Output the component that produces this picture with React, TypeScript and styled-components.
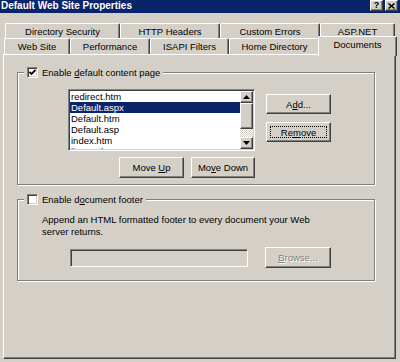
import React from "react";
import styled, { createGlobalStyle, css } from "styled-components";

const FACE = "#d4d0c8";
const NAVY = "#0a246a";

const GlobalStyle = createGlobalStyle`
  html, body { margin: 0; padding: 0; }
  body {
    font-family: "Liberation Sans", Arial, sans-serif;
    font-size: 9.5px;
    color: #000;
    background: ${FACE};
  }
  * { box-sizing: border-box; }
`;

const raised = css`
  border: 1px solid;
  border-color: #fff #404040 #404040 #fff;
  box-shadow: inset -1px -1px 0 #808080;
  background: ${FACE};
`;

const sunken = css`
  border: 1px solid;
  border-color: #808080 #fff #fff #808080;
  box-shadow: inset 1px 1px 0 #404040, inset -1px -1px 0 ${FACE};
`;

const Window = styled.div`
  width: 400px;
  height: 362px;
  background: ${FACE};
  display: flex;
  flex-direction: column;
  overflow: hidden;
`;

const TitleBar = styled.div`
  height: 13px;
  flex: none;
  background: ${NAVY};
  display: flex;
  justify-content: space-between;
  align-items: flex-start;
  padding-right: 2px;
`;

const TitleText = styled.div`
  color: #fff;
  font-weight: bold;
  font-size: 10px;
  line-height: 12px;
  white-space: nowrap;
  padding-left: 1px;
`;

const CaptionButtons = styled.div`
  display: flex;
  gap: 2px;
`;

const CaptionButton = styled.div`
  ${raised};
  width: 13px;
  height: 11px;
  display: flex;
  align-items: center;
  justify-content: center;
  font-weight: bold;
  font-size: 9px;
  line-height: 9px;
`;

const Body = styled.div`
  flex: 1;
  min-height: 0;
  display: flex;
  flex-direction: column;
  padding: 10px 4px 3px 3px;
`;

const TabRow = styled.div<{ $h: number; $indent: number }>`
  display: flex;
  align-items: flex-end;
  flex: none;
  height: ${(p) => p.$h}px;
  padding-left: ${(p) => p.$indent}px;
`;

const Tab = styled.div<{ $w: number; $active?: boolean }>`
  width: ${(p) => p.$w}px;
  height: 100%;
  flex: none;
  background: ${FACE};
  border-top: 1px solid #fff;
  border-left: 1px solid #fff;
  border-right: 1px solid #404040;
  box-shadow: inset -1px 0 0 #808080;
  border-radius: 2px 2px 0 0;
  display: flex;
  align-items: center;
  justify-content: center;
  white-space: nowrap;
  ${(p) =>
    p.$active &&
    css`
      height: 20px;
      margin: 0 -2px -2px -2px;
      padding-bottom: 4px;
      position: relative;
      z-index: 1;
    `}
`;

const Panel = styled.div`
  flex: 1;
  border: 1px solid;
  border-color: #fff #404040 #404040 #fff;
  box-shadow: inset -1px -1px 0 #808080;
  padding: 17px 0 0 13px;
  display: flex;
  flex-direction: column;
  gap: 14px;
`;

const Group = styled.div`
  position: relative;
  width: 358px;
  border: 1px solid #808080;
  box-shadow: inset 1px 1px 0 #fff, 1px 1px 0 #fff;
`;

const Legend = styled.div`
  position: absolute;
  top: -6px;
  left: 6px;
  padding: 0 3px;
  background: ${FACE};
  display: flex;
  align-items: center;
  gap: 4px;
  line-height: 11px;
  white-space: nowrap;
`;

const CheckBox = styled.span`
  ${sunken};
  width: 11px;
  height: 11px;
  flex: none;
  background: #fff;
  display: flex;
  align-items: center;
  justify-content: center;
`;

const ContentBody = styled.div`
  display: grid;
  grid-template-columns: 187px 65px;
  column-gap: 11px;
  row-gap: 6px;
  padding: 16px 0 6px 50px;
`;

const ListBox = styled.div`
  ${sunken};
  background: #fff;
  height: 62px;
  padding: 1px;
  display: flex;
`;

const ListItems = styled.div`
  flex: 1;
  overflow: hidden;
`;

const ListItem = styled.div<{ $selected?: boolean }>`
  height: 11px;
  line-height: 11px;
  padding-left: 1px;
  white-space: nowrap;
  background: ${(p) => (p.$selected ? NAVY : "transparent")};
  color: ${(p) => (p.$selected ? "#fff" : "#000")};
`;

const ScrollBar = styled.div`
  width: 13px;
  flex: none;
  display: flex;
  flex-direction: column;
`;

const ScrollArrow = styled.div`
  ${raised};
  height: 12px;
  flex: none;
  display: flex;
  align-items: center;
  justify-content: center;
`;

const ScrollThumb = styled.div`
  ${raised};
  height: 26px;
  flex: none;
`;

const ScrollTrack = styled.div`
  flex: 1;
  background-color: #fff;
  background-image: conic-gradient(${FACE} 25%, #fff 0 50%, ${FACE} 0 75%, #fff 0);
  background-size: 2px 2px;
`;

const ButtonStack = styled.div`
  padding-top: 5px;
  display: flex;
  flex-direction: column;
  gap: 8px;
`;

const MoveRow = styled.div`
  display: flex;
  justify-content: flex-end;
  gap: 7px;
`;

const PushButton = styled.button<{ $w: number; $h: number; $focused?: boolean }>`
  ${raised};
  width: ${(p) => p.$w}px;
  height: ${(p) => p.$h}px;
  padding: 0;
  font: inherit;
  color: #000;
  position: relative;
  display: flex;
  align-items: center;
  justify-content: center;
  white-space: nowrap;
  ${(p) =>
    p.$focused &&
    css`
      &::after {
        content: "";
        position: absolute;
        inset: 3px;
        border: 1px dotted #000;
      }
    `}
  &:disabled {
    color: #808080;
    text-shadow: 1px 1px 0 #fff;
  }
`;

const ButtonLabel = styled.span`
  white-space: pre;
`;

const FooterBody = styled.div`
  padding: 14px 0 12px 24px;
  display: flex;
  flex-direction: column;
  gap: 9px;
`;

const FooterText = styled.p`
  margin: 0;
  line-height: 12px;
  white-space: nowrap;
`;

const BrowseRow = styled.div`
  display: flex;
  align-items: center;
  gap: 17px;
  padding-left: 28px;
`;

const TextInput = styled.div`
  ${sunken};
  width: 178px;
  height: 18px;
  background: ${FACE};
`;

const Check = () => (
  <svg width="7" height="7" viewBox="0 0 7 7">
    <polyline points="0.5,3 2.5,5 6.5,1" fill="none" stroke="#000" strokeWidth="1.8" />
  </svg>
);

const Arrow = ({ up }: { up?: boolean }) => (
  <svg width="7" height="4" viewBox="0 0 7 4">
    <polygon points={up ? "3.5,0 7,4 0,4" : "0,0 7,0 3.5,4"} fill="#000" />
  </svg>
);

const CloseGlyph = () => (
  <svg width="7" height="6" viewBox="0 0 7 6">
    <path d="M0.5 0.5 L6.5 5.5 M6.5 0.5 L0.5 5.5" stroke="#000" strokeWidth="1.5" />
  </svg>
);

const topTabs = [
  { label: "Directory Security", w: 115 },
  { label: "HTTP Headers", w: 100 },
  { label: "Custom Errors", w: 100 },
  { label: "ASP.NET", w: 75 },
];

const bottomTabs = [
  { label: "Web Site", w: 66 },
  { label: "Performance", w: 80 },
  { label: "ISAPI Filters", w: 79 },
  { label: "Home Directory", w: 91 },
  { label: "Documents", w: 79, active: true },
];

const documents = [
  "redirect.htm",
  "Default.aspx",
  "Default.htm",
  "Default.asp",
  "index.htm",
  "iisstart.htm",
];

export default function App() {
  return (
    <>
      <GlobalStyle />
      <Window>
        <TitleBar>
          <TitleText>Default Web Site Properties</TitleText>
          <CaptionButtons>
            <CaptionButton>?</CaptionButton>
            <CaptionButton>
              <CloseGlyph />
            </CaptionButton>
          </CaptionButtons>
        </TitleBar>
        <Body>
          <TabRow $h={15} $indent={2}>
            {topTabs.map((t) => (
              <Tab key={t.label} $w={t.w}>
                {t.label}
              </Tab>
            ))}
          </TabRow>
          <TabRow $h={16} $indent={1}>
            {bottomTabs.map((t) => (
              <Tab key={t.label} $w={t.w} $active={t.active}>
                {t.label}
              </Tab>
            ))}
          </TabRow>
          <Panel>
            <Group>
              <Legend>
                <CheckBox>
                  <Check />
                </CheckBox>
                <span>
                  Enable <u>d</u>efault content page
                </span>
              </Legend>
              <ContentBody>
                <ListBox>
                  <ListItems>
                    {documents.map((d, i) => (
                      <ListItem key={d} $selected={i === 1}>
                        {d}
                      </ListItem>
                    ))}
                  </ListItems>
                  <ScrollBar>
                    <ScrollArrow>
                      <Arrow up />
                    </ScrollArrow>
                    <ScrollThumb />
                    <ScrollTrack />
                    <ScrollArrow>
                      <Arrow />
                    </ScrollArrow>
                  </ScrollBar>
                </ListBox>
                <ButtonStack>
                  <PushButton $w={65} $h={20}>
                    <ButtonLabel>
                      A<u>d</u>d...
                    </ButtonLabel>
                  </PushButton>
                  <PushButton $w={65} $h={20} $focused>
                    <ButtonLabel>
                      Re<u>m</u>ove
                    </ButtonLabel>
                  </PushButton>
                </ButtonStack>
                <MoveRow>
                  <PushButton $w={65} $h={21}>
                    <ButtonLabel>
                      {"Move "}
                      <u>U</u>p
                    </ButtonLabel>
                  </PushButton>
                  <PushButton $w={64} $h={21}>
                    <ButtonLabel>
                      Mo<u>v</u>e Down
                    </ButtonLabel>
                  </PushButton>
                </MoveRow>
              </ContentBody>
            </Group>
            <Group>
              <Legend>
                <CheckBox />
                <span>
                  Enable d<u>o</u>cument footer
                </span>
              </Legend>
              <FooterBody>
                <FooterText>
                  Append an HTML formatted footer to every document your Web
                  <br />
                  server returns.
                </FooterText>
                <BrowseRow>
                  <TextInput />
                  <PushButton $w={66} $h={21} disabled>
                    <ButtonLabel>
                      <u>B</u>rowse...
                    </ButtonLabel>
                  </PushButton>
                </BrowseRow>
              </FooterBody>
            </Group>
          </Panel>
        </Body>
      </Window>
    </>
  );
}
